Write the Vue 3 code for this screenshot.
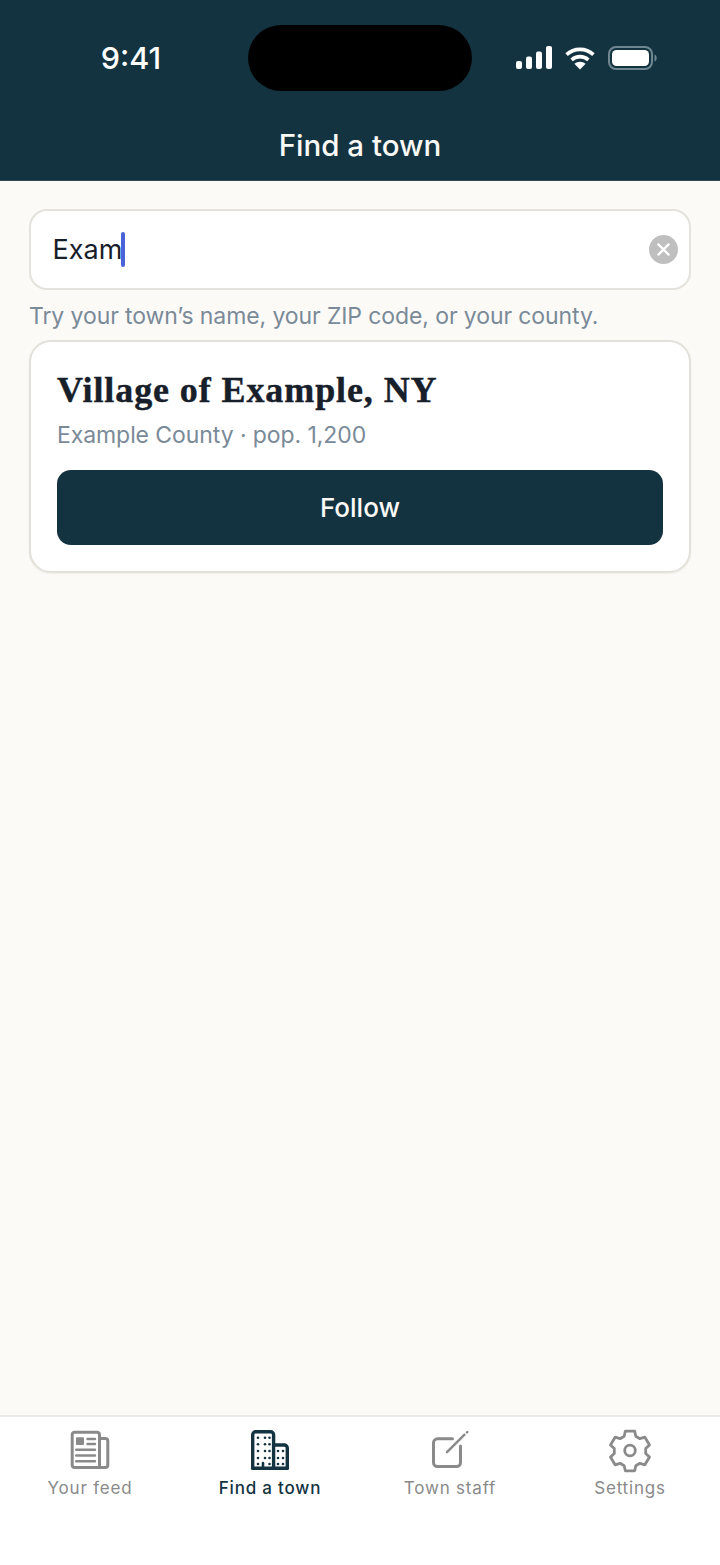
<template>
  <div class="screen">
    <header class="top">
      <div class="status">
        <span class="clock">9:41</span>
        <div class="island"></div>
        <div class="status-icons">
          <svg width="36" height="24" viewBox="0 0 36 24" fill="#fff">
            <rect x="0" y="15" width="6" height="8" rx="2" />
            <rect x="10" y="10.500" width="6" height="12.500" rx="2" />
            <rect x="20" y="5.500" width="6" height="17.500" rx="2" />
            <rect x="30" y="0" width="6" height="23" rx="2" />
          </svg>
          <svg width="30" height="24" viewBox="0 0 30 24" fill="none" stroke="#fff" stroke-width="3.600">
            <path d="M1.600 8.600C9 1.600 21 1.600 28.400 8.600" />
            <path d="M6.600 13.800C11.400 9.600 18.600 9.600 23.400 13.800" />
            <path d="M15 23.500 9.400 17.800C12.600 15 17.400 15 20.600 17.800Z" fill="#fff" stroke="none" />
          </svg>
          <svg width="50" height="24" viewBox="0 0 50 24" fill="none">
            <rect x="1" y="1" width="43" height="22" rx="7" stroke="#6f8791" stroke-width="2" />
            <rect x="4" y="4" width="37" height="16" rx="4.500" fill="#fff" />
            <path d="M46.500 8.500c1.600.5 2.200 2 2.200 3.500s-.6 3-2.200 3.500z" fill="#6f8791" />
          </svg>
        </div>
      </div>
      <h1 class="title">Find a town</h1>
    </header>

    <main class="content">
      <div class="search">
        <span class="query">Exam</span><span class="caret"></span>
        <span class="clear">
          <svg width="13" height="13" viewBox="0 0 14 14" stroke="#fff" stroke-width="2.400" stroke-linecap="round">
            <path d="M1.500 1.500 12.500 12.500M12.500 1.500 1.500 12.500" />
          </svg>
        </span>
      </div>
      <p class="hint">Try your town’s name, your ZIP code, or your county.</p>

      <section class="card">
        <h2 class="town">Village of Example, NY</h2>
        <p class="meta">Example County · pop. 1,200</p>
        <button class="follow">Follow</button>
      </section>
    </main>

    <nav class="tabs">
      <div v-for="tab in tabs" :key="tab.label" class="tab" :class="{ active: tab.active }">
        <svg width="44" height="44" viewBox="0 0 44 44" fill="none" stroke="currentColor" stroke-width="2.400" stroke-linecap="round" stroke-linejoin="round">
          <template v-if="tab.icon === 'feed'">
            <path d="M4.200 5.700A2.500 2.500 0 0 1 6.700 3.200H29A2.500 2.500 0 0 1 31.500 5.700V38.500H6.700A2.500 2.500 0 0 1 4.200 36Z" stroke-width="3" />
            <path d="M31.500 9.500H37.300A2.500 2.500 0 0 1 39.800 12V36A2.500 2.500 0 0 1 37.300 38.500H31.500" stroke-width="3" />
            <rect x="8" y="8.300" width="8" height="7.700" rx="1" fill="currentColor" stroke="none" />
            <path d="M19.500 10H27M19.500 15H27M8.200 20.700H27M8.200 26.500H27M8.200 32.200H27" />
          </template>
          <template v-else-if="tab.icon === 'town'">
            <path d="M4.700 39.300V5.700A3 3 0 0 1 7.700 2.700H22.600A3 3 0 0 1 25.600 5.700V39.300" stroke-width="3.400" />
            <path d="M25.600 16H36.300A3 3 0 0 1 39.300 19V39.300" stroke-width="3.400" />
            <path d="M4.700 39.300H39.300" stroke-width="3.400" />
            <path d="M15 39V34" stroke-width="2.600" />
            <g fill="currentColor" stroke="none">
              <circle v-for="d in townDots" :key="d[0] + '-' + d[1]" :cx="d[0]" :cy="d[1]" r="1.300" />
            </g>
          </template>
          <template v-else-if="tab.icon === 'staff'">
            <path d="M24.500 9.800H9.500A4 4 0 0 0 5.500 13.800V33.500A4 4 0 0 0 9.500 37.500H28.500A4 4 0 0 0 32.500 33.500V17" stroke-width="3" />
            <path d="M19 23.200 36.500 5.700" stroke-width="2.400" />
            <path d="M39 3.400 39.400 3" stroke-width="2.400" />
          </template>
          <template v-else>
            <path d="M17.300 2.200h9.400l1.100 5.100 4.100 2.400 5-1.500 4.600 7.800-3.800 3.600v4.800l3.800 3.600-4.600 7.800-5-1.500-4.100 2.400-1.100 5.100h-9.400l-1.100-5.100-4.100-2.400-5 1.500-4.600-7.800 3.800-3.600v-4.800l-3.800-3.600 4.600-7.800 5 1.500 4.100-2.400z" stroke-width="2.800" />
            <circle cx="22" cy="21.500" r="5.300" stroke-width="2.800" />
          </template>
        </svg>
        <span class="tab-label">{{ tab.label }}</span>
      </div>
    </nav>
  </div>
</template>

<script setup>
const tabs = [
  { label: 'Your feed', icon: 'feed' },
  { label: 'Find a town', icon: 'town', active: true },
  { label: 'Town staff', icon: 'staff' },
  { label: 'Settings', icon: 'gear' },
]

// window dots of the two buildings
const townDots = []
for (const y of [8.700, 15.300, 22, 29, 35]) {
  for (const x of [10, 17, 21.500]) {
    if (!(x === 17 && y === 35)) townDots.push([x, y])
  }
}
for (const y of [22, 29, 35]) {
  for (const x of [30, 35]) townDots.push([x, y])
}
</script>

<style>
html,
body {
  margin: 0;
  background: #fcfaf7;
}
</style>

<style scoped>
* {
  box-sizing: border-box;
}

.screen {
  width: 720px;
  height: 1565px;
  display: flex;
  flex-direction: column;
  overflow: hidden;
  background: #fcfaf7;
  font-family: Inter, 'Noto Sans', sans-serif;
}

.top {
  height: 181px;
  flex: none;
  background: #143341;
  color: #fbf9f6;
  border-bottom: 1px solid #2f4a56;
}

.status {
  height: 115px;
  padding-top: 25px;
  display: flex;
  align-items: flex-start;
}

.clock {
  width: 248px;
  padding-top: 14px;
  padding-left: 14px;
  text-align: center;
  font-size: 30.500px;
  line-height: 38px;
  font-weight: 500;
  color: #fff;
}

.island {
  width: 224px;
  height: 66px;
  border-radius: 33px;
  background: #000;
}

.status-icons {
  margin-left: 44px;
  margin-top: 21px;
  display: flex;
  align-items: center;
  gap: 13px;
}

.title {
  margin: 0;
  text-align: center;
  font-size: 29.500px;
  line-height: 60px;
  font-weight: 500;
}

.content {
  flex: 1;
  padding: 28px 29px 0;
}

.search {
  height: 81px;
  padding-left: 21.500px;
  display: flex;
  align-items: center;
  background: #fff;
  border: 2px solid #e5e2dc;
  border-radius: 18px;
}

.query {
  font-size: 27px;
  color: #17202a;
}

.caret {
  width: 4px;
  height: 35px;
  margin-left: -1px;
  border-radius: 2px;
  background: #4a63d8;
}

.clear {
  width: 29px;
  height: 29px;
  margin-left: auto;
  margin-right: 11.500px;
  display: flex;
  align-items: center;
  justify-content: center;
  border-radius: 50%;
  background: #bfbfbf;
}

.hint {
  margin: 11px 0 9px;
  font-size: 23px;
  line-height: 30px;
  letter-spacing: -0.100px;
  color: #7a8a98;
}

.card {
  padding: 26px;
  background: #fff;
  border: 2px solid #e3e0da;
  border-radius: 22px;
  box-shadow: 0 1px 2px rgba(0, 0, 0, 0.05);
}

.town {
  margin: 0;
  font-family: 'Liberation Serif', serif;
  font-size: 36px;
  line-height: 44px;
  font-weight: 700;
  letter-spacing: 0.900px;
  -webkit-text-stroke: 0.400px #17202a;
  color: #17202a;
}

.meta {
  margin: 8px 0 0;
  font-size: 23px;
  line-height: 30px;
  letter-spacing: -0.080px;
  color: #7a8a98;
}

.follow {
  display: block;
  width: 100%;
  height: 75px;
  margin-top: 20px;
  border: 0;
  border-radius: 14px;
  background: #143341;
  color: #fbf9f6;
  font-family: inherit;
  font-size: 26px;
  font-weight: 500;
}

.tabs {
  height: 150px;
  flex: none;
  padding-top: 12px;
  display: grid;
  grid-template-columns: repeat(4, 180px);
  background: #fff;
  border-top: 2px solid #eceae6;
}

.tab {
  display: flex;
  flex-direction: column;
  align-items: center;
  color: #8a8a8a;
}

.tab.active {
  color: #143341;
}

.tab-label {
  margin-top: 2px;
  font-size: 17px;
  line-height: 26px;
  font-weight: 400;
  letter-spacing: 0.800px;
}

.tab.active .tab-label {
  font-weight: 500;
}
</style>
